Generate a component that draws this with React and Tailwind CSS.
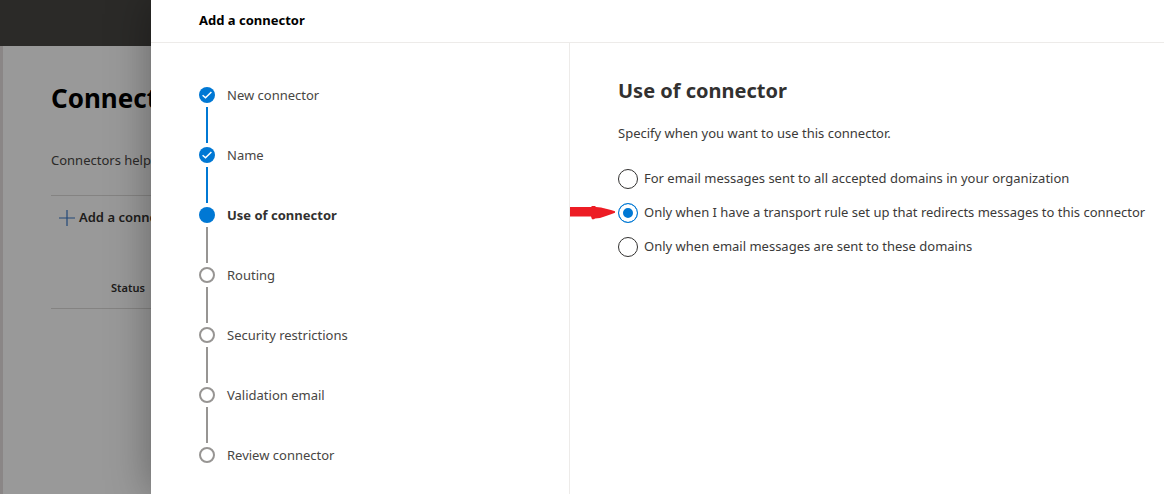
import React, { useState } from "react"

const steps = [
  { label: "New connector", status: "done" },
  { label: "Name", status: "done" },
  { label: "Use of connector", status: "current" },
  { label: "Routing", status: "todo" },
  { label: "Security restrictions", status: "todo" },
  { label: "Validation email", status: "todo" },
  { label: "Review connector", status: "todo" },
]

const options = [
  { id: "all", label: "For email messages sent to all accepted domains in your organization" },
  {
    id: "rule",
    label: "Only when I have a transport rule set up that redirects messages to this connector",
  },
  { id: "domains", label: "Only when email messages are sent to these domains" },
]

const StepIcon = ({ status }) => {
  if (status === "todo") {
    return <span className="block size-4 rounded-full border-2 border-[#979593]" />
  }
  return (
    <span className="flex size-4 items-center justify-center rounded-full bg-[#0078d4]">
      {status === "done" && (
        <svg viewBox="0 0 16 16" className="size-4" fill="none" stroke="#fff" strokeWidth="1.5">
          <path d="M3.6 8.2 6.5 10.8 12.4 5" />
        </svg>
      )}
    </span>
  )
}

const Steps = () => (
  <ol className="w-[419px] shrink-0 border-r border-[#edebe9] pt-11 pl-12">
    {steps.map((step, index) => (
      <li key={step.label} className="flex gap-3">
        <div className="flex flex-col items-center">
          <StepIcon status={step.status} />
          {index < steps.length - 1 && (
            <span
              className={
                step.status === "done"
                  ? "my-1 h-9 w-0.5 bg-[#0078d4]"
                  : "my-1 h-9 w-0.5 bg-[#979593]"
              }
            />
          )}
        </div>
        <span
          className={
            step.status === "current"
              ? "text-[13px] leading-4 font-bold text-[#323130]"
              : "text-[13px] leading-4 text-[#484644]"
          }
        >
          {step.label}
        </span>
      </li>
    ))}
  </ol>
)

const ConnectorsPage = () => (
  <div className="min-h-screen bg-white whitespace-nowrap">
    <div className="h-[46px] bg-[#484644]" />
    <main className="min-h-[448px] border-l-3 border-[#e6e0e0] pt-9 pl-12">
      <h1 className="text-[26px] leading-8 font-bold text-black">Connectors</h1>
      <p className="mt-9 text-[13px] leading-5 text-[#484644]">Connectors help</p>
      <div className="mt-[25px] flex flex-col gap-11 border-y border-[#dddbd9] pt-2.5 pb-2.5">
        <button className="flex h-6 items-center gap-1 pl-2 text-[13px] font-semibold text-[#323130]">
          <svg viewBox="0 0 16 16" className="size-4" stroke="#3a78c8" strokeWidth="1.2">
            <path d="M8 0V16M0 8H16" />
          </svg>
          Add a connector
        </button>
        <span className="h-6 pt-1 pl-[60px] text-[11px] leading-5 font-semibold text-[#323130]">
          Status
        </span>
      </div>
    </main>
  </div>
)

const ConnectorPanel = () => {
  const [selected, setSelected] = useState("rule")

  return (
    <div
      role="dialog"
      aria-labelledby="panel-title"
      className="ml-[151px] flex flex-1 flex-col bg-white shadow-[0_0_40px_rgba(0,0,0,0.35)]"
    >
      <header className="flex h-[43px] items-center border-b border-[#edebe9] px-12 pb-0.5">
        <h2 id="panel-title" className="text-[13px] leading-5 font-bold text-black">
          Add a connector
        </h2>
      </header>
      <div className="flex flex-1">
        <Steps />
        <form className="min-w-0 flex-1 pt-8">
          <h3 className="pl-12 text-xl leading-8 font-bold text-[#323130]">Use of connector</h3>
          <p className="mt-4 pl-12 text-[13px] leading-5 text-[#3b3a39]">
            Specify when you want to use this connector.
          </p>
          <div className="mt-6 flex flex-col gap-2.5">
            {options.map((option) => (
              <div key={option.id} className="flex h-6 items-center">
                <span className="w-12 shrink-0">
                  {option.id === "rule" && (
                    <svg viewBox="0 0 46 14" className="h-3.5 w-[46px]" fill="#ed1c24">
                      <path d="M0 1H21L22 0H25L26 1L31 1.5L36 2.8L41 4L45 5.2V6.8L41 8.2L36 10L30 12L25 12.5L24 13.2H22L21 10.5H0Z" />
                    </svg>
                  )}
                </span>
                <label className="flex items-center gap-1.5 text-[13px] whitespace-nowrap text-[#3b3a39]">
                  <input
                    type="radio"
                    name="use"
                    checked={selected === option.id}
                    onChange={() => setSelected(option.id)}
                    className="size-5 shrink-0 appearance-none rounded-full border border-[#323130] bg-white checked:border-[#0078d4] checked:bg-[#0078d4] checked:shadow-[inset_0_0_0_4px_#fff]"
                  />
                  {option.label}
                </label>
              </div>
            ))}
          </div>
        </form>
      </div>
    </div>
  )
}

export default function App() {
  return (
    <div className="relative min-h-screen overflow-hidden font-['Noto_Sans','Open_Sans',sans-serif]">
      <ConnectorsPage />
      <div className="absolute inset-0 flex bg-black/40">
        <ConnectorPanel />
      </div>
    </div>
  )
}
